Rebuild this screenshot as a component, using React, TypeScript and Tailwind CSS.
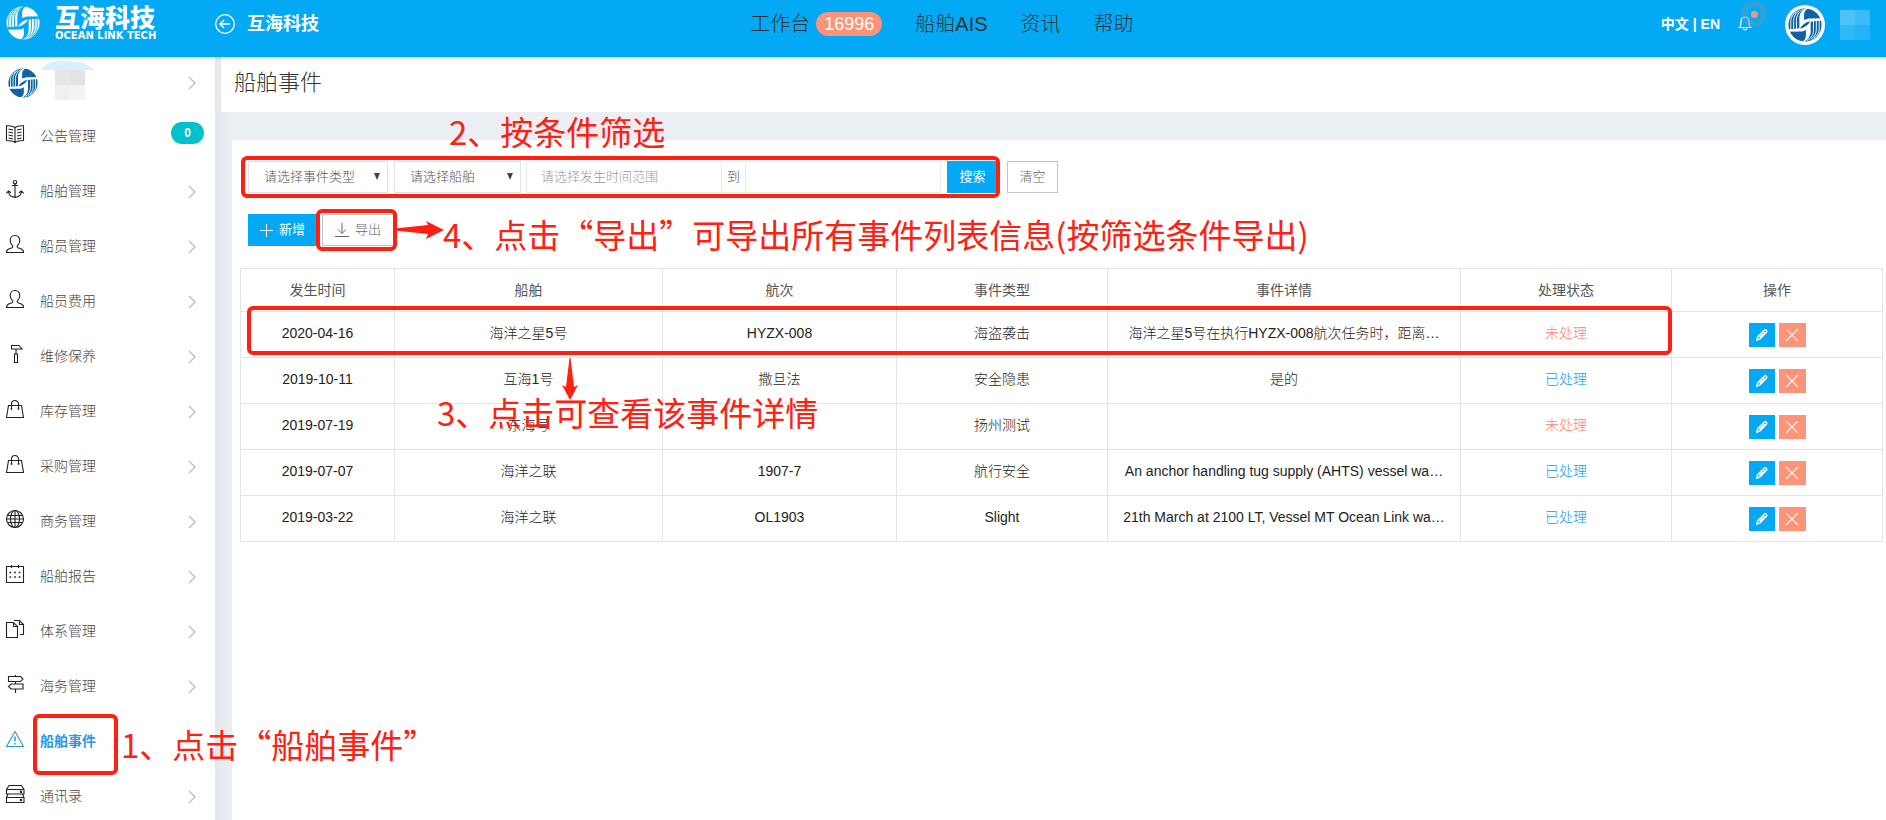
import type { ReactNode } from 'react'

type MenuItem = {
  label: string
  icon: ReactNode
  badge?: string
  active?: boolean
}

type EventRow = {
  date: string
  ship: string
  voyage: string
  type: string
  detail: string
  done: boolean
}

function Icon({ children }: { children: ReactNode }) {
  return (
    <svg
      viewBox="0 0 18 18"
      className="h-[18px] w-[18px] shrink-0 overflow-visible"
      fill="none"
      stroke="currentColor"
      strokeWidth="1.1"
      aria-hidden="true"
    >
      {children}
    </svg>
  )
}

const userIcon = (
  <Icon>
    <path d="M.5 17.5h17c0-2.4-.8-3.2-2.6-3.8l-3-1c-.9-.4-.9-1.3-.3-2 1.3-1.4 2.2-3 2.2-5.2 0-3-1.9-5-4.8-5s-4.8 2-4.8 5c0 2.2.9 3.8 2.2 5.2.6.7.6 1.6-.3 2l-3 1C1.3 14.3.5 15.1.5 17.5z" />
  </Icon>
)

const bagIcon = (
  <Icon>
    <path d="M2.5 5.500h13l2 12H.5zM5.500 9V4a3.500 3.500 0 0 1 7 0v5" />
    <path d="M4.700 9h1.600M11.700 9h1.600" strokeWidth="1.6" />
  </Icon>
)

const menu: MenuItem[] = [
  {
    label: '公告管理',
    badge: '0',
    icon: (
      <Icon>
        <path d="M.5.8C4 .5 7 1 9 2.500 11 1 14 .5 17.500.8v14.700C14 15.500 11 16 9 17.500 7 16 4 15.500.5 15.500zM9 2.500v15" />
        <path d="M2.500 4l4.500 1M2.500 7l4.500 1M2.500 10l4.500 1M2.500 13l4.500 1M15.500 4L11 5M15.500 7L11 8M15.500 10L11 11M15.500 13L11 14" />
      </Icon>
    ),
  },
  {
    label: '船舶管理',
    icon: (
      <Icon>
        <circle cx="9" cy="2.2" r="1.7" />
        <path d="M9 4v13.500M6 5.500h6M2.500 11.500c.3 3.500 3 5.500 6.500 5.900 3.500-.4 6.200-2.400 6.500-5.900M.3 13.300l2.200-2.300 2.500 1.800M17.700 13.300l-2.200-2.300-2.500 1.800" />
      </Icon>
    ),
  },
  { label: '船员管理', icon: userIcon },
  { label: '船员费用', icon: userIcon },
  {
    label: '维修保养',
    icon: (
      <Icon>
        <path d="M5.500.5h7.500l3 3.500H5.500zM10 4v5M8.500 9h3v8.500h-3z" />
      </Icon>
    ),
  },
  { label: '库存管理', icon: bagIcon },
  { label: '采购管理', icon: bagIcon },
  {
    label: '商务管理',
    icon: (
      <Icon>
        <circle cx="9" cy="9" r="8.5" />
        <ellipse cx="9" cy="9" rx="4.5" ry="8.5" />
        <path d="M9 .5v17M.5 9h17M2 5.500h14M2 12.500h14" />
      </Icon>
    ),
  },
  {
    label: '船舶报告',
    icon: (
      <Icon>
        <path d="M.5 1.500h17v16H.5zM5.500 0v3M12.500 0v3" />
        <path d="M3.500 7.500h11M3.500 12h11" strokeWidth="1.7" strokeDasharray="1.7 2.900" />
      </Icon>
    ),
  },
  {
    label: '体系管理',
    icon: (
      <Icon>
        <path d="M.5 2.500h7l4 4v11H.5zM7.500 2.500v4h4M8 .5h5.500l4 4v10H14M13.500.5v4h4" />
      </Icon>
    ),
  },
  {
    label: '海务管理',
    icon: (
      <Icon>
        <path d="M9.500 0v1.500M2.500 1.500h12L17 4l-2.500 2.500h-12zM9.500 6.500v2.500M17 9v5H5L2.500 11.500 5 9zM9.500 14v4" />
      </Icon>
    ),
  },
  {
    label: '船舶事件',
    active: true,
    icon: (
      <Icon>
        <path d="M9 1.500L17.500 16.500H.5z" />
        <path d="M9 6.500v5M9 13v1.500" strokeWidth="1.5" />
      </Icon>
    ),
  },
  {
    label: '通讯录',
    icon: (
      <Icon>
        <path d="M.5 4.500L3 .5h12.500l2.500 4M.5 4.500H18v4.500H.5zM.5 12.500L2 9M.5 12.500H18v5H.5zM18 12.500L16.500 9" />
        <circle cx="15" cy="6.8" r=".8" />
        <circle cx="15" cy="15" r=".8" />
      </Icon>
    ),
  },
]

const rows: EventRow[] = [
  {
    date: '2020-04-16',
    ship: '海洋之星5号',
    voyage: 'HYZX-008',
    type: '海盗袭击',
    detail: '海洋之星5号在执行HYZX-008航次任务时，距离…',
    done: false,
  },
  { date: '2019-10-11', ship: '互海1号', voyage: '撒旦法', type: '安全隐患', detail: '是的', done: true },
  { date: '2019-07-19', ship: '东海号', voyage: '', type: '扬州测试', detail: '', done: false },
  {
    date: '2019-07-07',
    ship: '海洋之联',
    voyage: '1907-7',
    type: '航行安全',
    detail: 'An anchor handling tug supply (AHTS) vessel wa…',
    done: true,
  },
  {
    date: '2019-03-22',
    ship: '海洋之联',
    voyage: 'OL1903',
    type: 'Slight',
    detail: '21th March at 2100 LT, Vessel MT Ocean Link wa…',
    done: true,
  },
]

// Round company mark: "fill" paints the blades, "gap" the lines between them.
function Logo({ fill, gap, className }: { fill: string; gap: string; className: string }) {
  return (
    <svg viewBox="0 0 36 36" className={className} aria-hidden="true">
      <circle cx="18" cy="18" r="17.5" fill={fill} />
      <g fill="none" stroke={gap} strokeWidth="1">
        <path d="M3 25V12.500C3.500 9 6 6 9 4M6 25V13c0-4 2-7.500 6-10.500M9 25V13c0-5 2-8.500 6.500-11.500" />
        <path d="M33 11v12.500C32.500 27 30 30 27 32M30 11v12c0 4-2 7.500-6 10.500M27 11v12c0 5-2 8.500-6.500 11.500" />
      </g>
      <g fill={gap}>
        <path d="M19.500 0C14.500 2 12 6 12 11v12.500L25 14.200l10.500-1V11H24c-3 0-5 .6-7 1.800V7c0-3 1.500-5 4.500-7z" />
        <path d="M16.500 36c5-2 7.500-6 7.500-11V12.500L11 21.800l-10.500 1V25H12c3 0 5-.6 7-1.800V29c0 3-1.500 5-4.500 7z" />
      </g>
      <path d="M12.500 22c2-4 6-7 11-8-2 4-6 7-11 8z" fill={fill} />
    </svg>
  )
}

function Chevron() {
  return (
    <svg
      viewBox="0 0 8 14"
      className="h-3.5 w-2 text-[#bfbfbf]"
      fill="none"
      stroke="currentColor"
      strokeWidth="1.4"
      aria-hidden="true"
    >
      <path d="M1 1l6 6-6 6" />
    </svg>
  )
}

function Frame({ className }: { className: string }) {
  return (
    <div
      className={`pointer-events-none absolute z-10 rounded-md border-4 border-[#ff2011] ${className}`}
    />
  )
}

function Note({ className, children }: { className: string; children: ReactNode }) {
  return (
    <p
      className={`pointer-events-none absolute z-20 whitespace-nowrap font-['Noto_Sans_CJK_SC',sans-serif] text-[33px] leading-10 font-normal text-[#ff2011] ${className}`}
    >
      {children}
    </p>
  )
}

function FilterSelect({ label, className }: { label: string; className: string }) {
  return (
    <div className={`relative h-8 ${className}`}>
      <select
        aria-label={label}
        className="h-full w-full appearance-none border border-[#dfe3e9] bg-white pl-[15px] text-[13px] font-light text-[#555]"
      >
        <option>{label}</option>
      </select>
      <svg
        viewBox="0 0 6 7"
        className="pointer-events-none absolute top-3 right-2 h-[7px] w-1.5 fill-[#444]"
        aria-hidden="true"
      >
        <path d="M0 0h6L3 7z" />
      </svg>
    </div>
  )
}

function Header() {
  return (
    <header className="relative z-10 flex h-[57px] shrink-0 items-start bg-[#03a9f5] text-white shadow-[0_1px_3px_rgba(0,0,0,0.2)]">
      <div className="flex w-[215px] shrink-0 gap-[15px] pt-[6px] pl-[6px]">
        <Logo fill="#fff" gap="#03a9f5" className="h-[34px] w-[34px]" />
        <div>
          <div className="text-[25px] leading-6 font-black">互海科技</div>
          <div className="font-['DejaVu_Sans',sans-serif] text-[10px] leading-3 font-bold whitespace-nowrap">
            OCEAN LINK TECH
          </div>
        </div>
      </div>
      <a href="#" className="flex items-center gap-3 pt-2.5 text-lg leading-7 font-bold">
        <svg
          viewBox="0 0 20 20"
          className="h-5 w-5"
          fill="none"
          stroke="currentColor"
          strokeWidth="1.3"
          aria-hidden="true"
        >
          <circle cx="10" cy="10" r="9.3" />
          <path d="M15 10H5.500M9 6l-4 4 4 4" strokeWidth="1.6" />
        </svg>
        互海科技
      </a>
      <nav className="flex flex-1 items-center justify-center gap-[33px] pt-2.5 pr-24 text-xl leading-7 font-light text-[#333]">
        <a href="#" className="flex items-center gap-1.5">
          工作台
          <span className="rounded-full bg-[#fd9378] px-2 text-lg leading-6 font-normal text-white">
            16996
          </span>
        </a>
        <a href="#">船舶AIS</a>
        <a href="#">资讯</a>
        <a href="#">帮助</a>
      </nav>
      <div className="flex items-start pr-4">
        <a href="#" className="pt-2.5 text-sm leading-7 font-bold">
          中文 | EN
        </a>
        <button type="button" aria-label="通知" className="relative mt-[15px] ml-[18px]">
          <svg
            viewBox="0 0 14 16"
            className="h-4 w-3.5"
            fill="none"
            stroke="currentColor"
            strokeWidth="1.2"
            aria-hidden="true"
          >
            <path d="M.5 12.500h13M2 12c1-1.500 1-3.500 1-6a4 4 0 0 1 8 0c0 2.500 0 4.500 1 6M5.300 13c.3 2.400 3.100 2.400 3.400 0" />
          </svg>
          <span className="absolute -top-3.5 left-[3px] flex h-[26px] w-[26px] items-center justify-center rounded-full border-[6px] border-[#5b9cba]/50">
            <span className="h-[7px] w-[7px] rounded-full bg-[#fd9378]" />
          </span>
        </button>
        <div className="mt-[5px] ml-[33px] h-10 w-10 rounded-full bg-white p-[3px]">
          <Logo fill="#0b62a4" gap="#fff" className="h-full w-full" />
        </div>
        <div className="mt-2.5 ml-[15px] grid grid-cols-2">
          <span className="h-[15px] w-[15px] bg-[#4fc3f9]" />
          <span className="h-[15px] w-[15px] bg-[#3bbcf8]" />
          <span className="h-[15px] w-[15px] bg-[#31b8f6]" />
          <span className="h-[15px] w-[15px] bg-[#24b3f6]" />
        </div>
      </div>
    </header>
  )
}

function Sidebar() {
  return (
    <aside className="w-[215px] shrink-0 bg-white">
      <div className="flex h-[52px] items-center pr-[19px] pl-2">
        <Logo fill="#0b62a4" gap="#fff" className="h-[30px] w-[30px]" />
        <div className="relative ml-[17px] grid grid-cols-2 pt-1">
          <svg viewBox="0 0 54 9" className="absolute -top-[5px] -left-3.5 h-[9px] w-[54px]" aria-hidden="true">
            <path d="M0 9C5 3 10 0 18 0l20 1c6 1 11 4 16 8z" fill="#d9effa" />
          </svg>
          <span className="h-[15px] w-[15px] bg-[#e6e6e6]" />
          <span className="h-[15px] w-[15px] bg-[#e3e3e3]" />
          <span className="h-[15px] w-[15px] bg-[#f0f0f0]" />
          <span className="h-[15px] w-[15px] bg-[#f3f3f3]" />
        </div>
        <div className="ml-auto">
          <Chevron />
        </div>
      </div>
      <nav>
        {menu.map((item) => (
          <div key={item.label} className="relative">
            <a
              href="#"
              className={
                item.active
                  ? 'flex h-[55px] items-center pr-[19px] pl-[6px] text-sm font-bold text-[#2f96e3]'
                  : 'flex h-[55px] items-center pr-[19px] pl-[6px] text-sm font-light text-[#444]'
              }
            >
              <span className={item.active ? 'pb-1.5' : 'pb-1.5 text-[#222]'}>{item.icon}</span>
              <span className="ml-4 pb-0.5">{item.label}</span>
              {item.badge ? (
                <span className="mb-2 -mr-2 ml-auto w-[33px] rounded-full bg-[#03c1cb] text-center text-xs leading-[22px] font-bold text-white">
                  {item.badge}
                </span>
              ) : (
                !item.active && (
                  <span className="ml-auto">
                    <Chevron />
                  </span>
                )
              )}
            </a>
            {item.active && (
              <>
                <Frame className="top-0 left-[33px] h-[61px] w-[85px]" />
                <Note className="top-2.5 left-[121px]">1、点击“船舶事件”</Note>
              </>
            )}
          </div>
        ))}
      </nav>
    </aside>
  )
}

function Filters() {
  return (
    <form className="flex items-center pl-4">
      <div className="relative flex">
        <FilterSelect label="请选择事件类型" className="mr-1.5 w-[140px]" />
        <FilterSelect label="请选择船舶" className="mr-[5px] w-[127px]" />
        <input
          type="text"
          aria-label="开始时间"
          placeholder="请选择发生时间范围"
          className="h-8 w-[196px] border border-[#e8ebef] px-3.5 pb-0.5 text-[13px] font-light placeholder:text-[#999]"
        />
        <span className="flex h-8 w-[23px] items-center justify-center border-y border-[#e8ebef] text-[13px] font-light text-[#555]">
          到
        </span>
        <input
          type="text"
          aria-label="结束时间"
          className="mr-1.5 h-8 w-[196px] border border-[#e8ebef] px-3.5 text-[13px] font-light"
        />
        <button type="button" className="h-8 w-[51px] bg-[#03a9f5] text-[13px] text-white">
          搜索
        </button>
        <Frame className="-top-[5px] -right-0.5 -bottom-[5px] -left-[7px]" />
        <Note className="-top-[50px] left-[201px]">2、按条件筛选</Note>
      </div>
      <button
        type="button"
        className="ml-[9px] h-8 w-[51px] border border-[#c2c4c8] text-[13px] font-light text-[#666]"
      >
        清空
      </button>
    </form>
  )
}

function Toolbar() {
  return (
    <div className="mt-[21px] flex pl-4">
      <button
        type="button"
        className="flex h-8 w-[69px] items-center justify-center gap-1.5 bg-[#03a9f5] text-[13px] text-white"
      >
        <svg viewBox="0 0 13 13" className="h-[13px] w-[13px]" stroke="currentColor" aria-hidden="true">
          <path d="M6.500 0v13M0 6.500h13" />
        </svg>
        新增
      </button>
      <div className="relative ml-[5px]">
        <button
          type="button"
          className="flex h-8 w-[72px] items-center justify-center gap-1.5 border border-[#c2c4c8] text-[13px] font-light text-[#666]"
        >
          <svg
            viewBox="0 0 14 14"
            className="h-3.5 w-3.5"
            fill="none"
            stroke="currentColor"
            aria-hidden="true"
          >
            <path d="M7 0v10M3 6.500l4 4 4-4M0 13.500h14" />
          </svg>
          导出
        </button>
        <Frame className="-top-[5px] -right-[3px] -bottom-[5px] -left-1.5" />
        <svg
          viewBox="0 0 49 18"
          className="pointer-events-none absolute top-[7px] left-[73px] z-20 h-[18px] w-[49px] fill-[#ff2011]"
          aria-hidden="true"
        >
          <path d="M0 7.500L33 4 31 0l18 9-18 9 2-5L0 9.500z" />
        </svg>
        <Note className="top-0 left-[121px]">4、点击“导出”可导出所有事件列表信息(按筛选条件导出)</Note>
      </div>
    </div>
  )
}

function EventTable() {
  return (
    <div className="relative mt-[22px] mr-[5px] ml-2">
      <table className="w-full table-fixed border-collapse text-center text-sm font-light text-[#222]">
        <colgroup>
          <col className="w-[154px]" />
          <col className="w-[268px]" />
          <col className="w-[234px]" />
          <col className="w-[211px]" />
          <col className="w-[353px]" />
          <col className="w-[211px]" />
          <col className="w-[211px]" />
        </colgroup>
        <thead>
          <tr className="h-[43px] text-[#555]">
            {['发生时间', '船舶', '航次', '事件类型', '事件详情', '处理状态', '操作'].map((h) => (
              <th key={h} className="border border-[#e3e5e8] font-normal">
                {h}
              </th>
            ))}
          </tr>
        </thead>
        <tbody>
          {rows.map((row) => (
            <tr key={row.date} className="h-[46px]">
              <td className="border border-[#e3e5e8] pb-1">{row.date}</td>
              <td className="border border-[#e3e5e8] pb-1">{row.ship}</td>
              <td className="border border-[#e3e5e8] pb-1">{row.voyage}</td>
              <td className="border border-[#e3e5e8] pb-1">{row.type}</td>
              <td className="truncate border border-[#e3e5e8] px-2 pb-1">{row.detail}</td>
              <td
                className={
                  row.done
                    ? 'border border-[#e3e5e8] pb-1 text-[#2196f3]'
                    : 'border border-[#e3e5e8] pb-1 text-[#fd8263]'
                }
              >
                {row.done ? '已处理' : '未处理'}
              </td>
              <td className="border border-[#e3e5e8]">
                <div className="flex justify-center gap-1 text-white">
                  <button
                    type="button"
                    aria-label="编辑"
                    className="flex h-6 w-[26px] items-center justify-center bg-[#03a9f5]"
                  >
                    <svg
                      viewBox="0 0 12 12"
                      className="h-3 w-3"
                      fill="none"
                      stroke="currentColor"
                      strokeWidth="1.4"
                      aria-hidden="true"
                    >
                      <path d="M.8 11.200l.9-3.500L8 1.400c.8-.8 1.600-.8 2.300-.1s.7 1.500-.1 2.300L4 10zM7 2.500L9.300 5M3.500 8.500l3.700-3.800" />
                    </svg>
                  </button>
                  <button
                    type="button"
                    aria-label="删除"
                    className="flex h-6 w-[27px] items-center justify-center bg-[#fd9378]"
                  >
                    <svg
                      viewBox="0 0 12 12"
                      className="h-3 w-3"
                      stroke="currentColor"
                      strokeWidth="1.2"
                      aria-hidden="true"
                    >
                      <path d="M0 0l12 12M12 0L0 12" />
                    </svg>
                  </button>
                </div>
              </td>
            </tr>
          ))}
        </tbody>
      </table>
      <Frame className="top-[38px] right-[209px] left-[7px] h-[49px]" />
      <svg
        viewBox="0 0 16 42"
        className="pointer-events-none absolute top-[90px] left-[322px] z-20 h-[42px] w-4 fill-[#ff2011]"
        aria-hidden="true"
      >
        <path d="M7.500 0h1L12 29l4-2-8 15-8-15 4 2z" />
      </svg>
      <Note className="top-[124px] left-[197px]">3、点击可查看该事件详情</Note>
    </div>
  )
}

export default function App() {
  return (
    <div className="flex h-screen flex-col overflow-hidden bg-[#ebeff4] font-['Liberation_Sans','Noto_Sans_CJK_SC',sans-serif]">
      <Header />
      <div className="flex flex-1">
        <Sidebar />
        <main className="flex min-w-0 flex-1 flex-col bg-linear-to-r from-[#e4e8ed] to-[#ebeff4] to-[17px]">
          <h1 className="ml-1.5 h-[55px] bg-white pl-[13px] text-[22px] leading-[52px] font-light text-[#333]">
            船舶事件
          </h1>
          <section className="mt-7 ml-[17px] flex-1 bg-white pt-[21px]">
            <Filters />
            <Toolbar />
            <EventTable />
          </section>
        </main>
      </div>
    </div>
  )
}
